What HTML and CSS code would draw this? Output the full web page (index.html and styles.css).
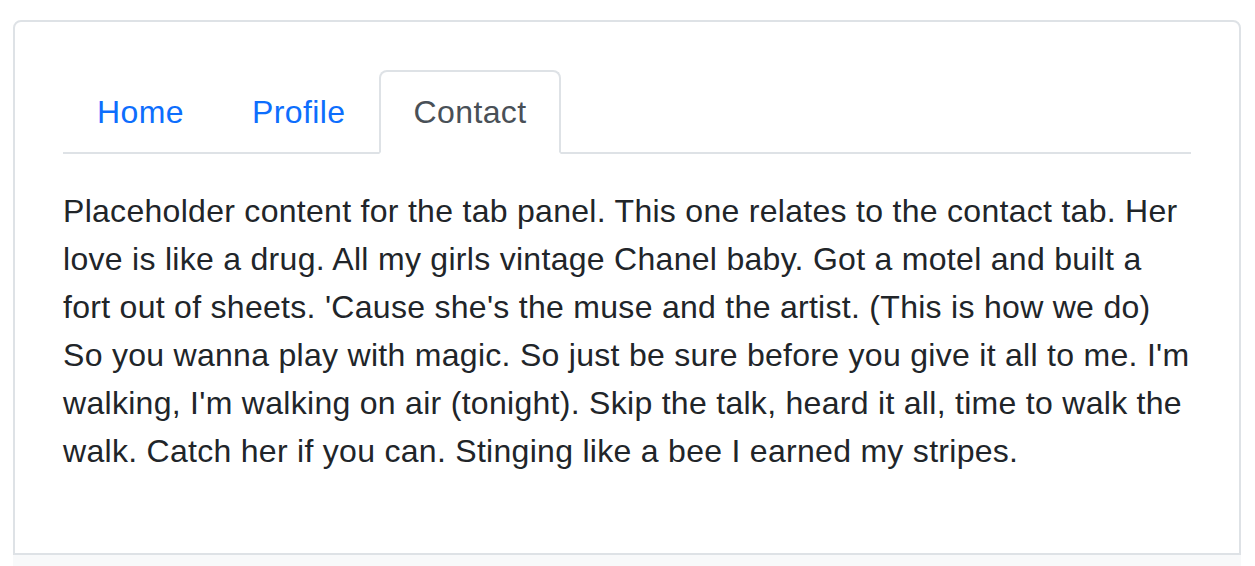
FILE: index.html
```html
<!DOCTYPE html>
<html lang="en">
<head>
    <meta charset="UTF-8">
    <meta name="viewport" content="width=device-width, initial-scale=1.0">
    <title>Tabs</title>
    <link rel="stylesheet" href="styles.css">
</head>
<body>
    <div class="example">
        <ul class="nav-tabs">
            <li><a class="nav-link" href="#">Home</a></li>
            <li><a class="nav-link" href="#">Profile</a></li>
            <li><a class="nav-link active" href="#">Contact</a></li>
        </ul>
        <div class="tab-content">
            <p>Placeholder content for the tab panel. This one relates to the contact tab. Her love is like a drug. All my girls vintage Chanel baby. Got a motel and built a fort out of sheets. 'Cause she's the muse and the artist. (This is how we do) So you wanna play with magic. So just be sure before you give it all to me. I'm walking, I'm walking on air (tonight). Skip the talk, heard it all, time to walk the walk. Catch her if you can. Stinging like a bee I earned my stripes.</p>
        </div>
    </div>
    <div class="snippet"></div>
</body>
</html>
```

FILE: styles.css
```css
body {
    margin: 0;
    padding: 20px 14px 0 13px;
    background-color: #fff;
    font-family: "Liberation Sans", Arial, sans-serif;
    font-size: 32px;
    line-height: 1.5;
    letter-spacing: 0.29px;
    color: #212529;
}

.example {
    border: 2px solid #dee2e6;
    border-radius: 8px 8px 0 0;
    padding: 48px 48px 0 48px;
}

.nav-tabs {
    display: flex;
    list-style: none;
    margin: 0;
    padding: 0;
    border-bottom: 2px solid #dee2e6;
}

.nav-link {
    display: block;
    padding: 16px 32px;
    margin-bottom: -2px;
    border: 2px solid transparent;
    border-radius: 8px 8px 0 0;
    color: #0d6efd;
    text-decoration: none;
    letter-spacing: 0.4px;
}

.nav-link.active {
    color: #495057;
    background-color: #fff;
    border-color: #dee2e6 #dee2e6 #fff;
}

.tab-content {
    padding-top: 33px;
}

.tab-content p {
    margin: 0 0 78px 0;
}

.snippet {
    height: 20px;
    background-color: #f8f9fa;
}
```
